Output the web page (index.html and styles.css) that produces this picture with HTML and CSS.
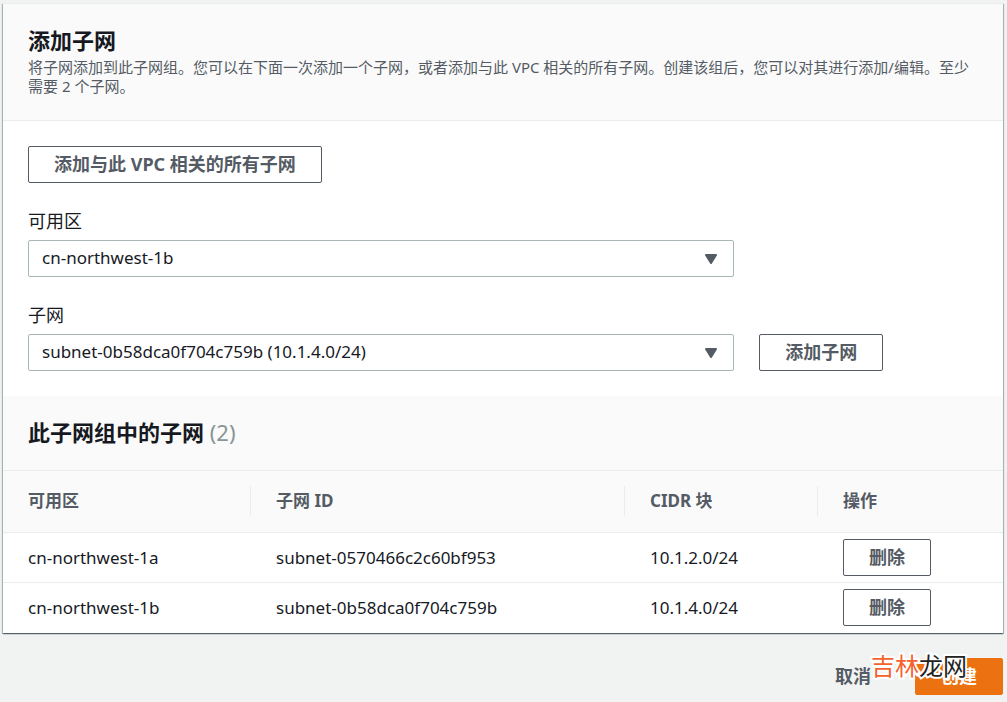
FILE: index.html
```html
<!DOCTYPE html>
<html lang="zh-CN">
<head>
<meta charset="utf-8">
<meta name="viewport" content="width=device-width, initial-scale=1">
<title>添加子网</title>
<link rel="stylesheet" href="styles.css">
</head>
<body>
<main class="page">
  <div class="panel">
    <header class="panel-header">
      <h2 class="title">添加子网</h2>
      <p class="description">将子网添加到此子网组。您可以在下面一次添加一个子网，或者添加与此 VPC 相关的所有子网。创建该组后，您可以对其进行添加/编辑。至少需要 2 个子网。</p>
    </header>
    <section class="form">
      <button class="btn" type="button">添加与此 VPC 相关的所有子网</button>
      <div class="field">
        <label class="label" for="zone">可用区</label>
        <div class="select-wrap">
          <select class="select" id="zone"><option>cn-northwest-1b</option></select>
          <svg class="caret" viewBox="0 0 14 12" aria-hidden="true"><path d="M2 2h10L7 10z"/></svg>
        </div>
      </div>
      <div class="field">
        <label class="label" for="subnet">子网</label>
        <div class="select-wrap">
          <select class="select" id="subnet"><option>subnet-0b58dca0f704c759b (10.1.4.0/24)</option></select>
          <svg class="caret" viewBox="0 0 14 12" aria-hidden="true"><path d="M2 2h10L7 10z"/></svg>
        </div>
        <div class="side"><button class="btn" type="button">添加子网</button></div>
      </div>
    </section>
    <header class="table-header">
      <h2 class="title">此子网组中的子网 <span class="count">(2)</span></h2>
    </header>
    <table class="table">
      <thead>
        <tr>
          <th class="col-zone"><div class="head">可用区</div></th>
          <th class="col-id"><div class="head">子网 ID</div></th>
          <th class="col-cidr"><div class="head">CIDR 块</div></th>
          <th class="col-action"><div class="head">操作</div></th>
        </tr>
      </thead>
      <tbody>
        <tr>
          <td>cn-northwest-1a</td>
          <td>subnet-0570466c2c60bf953</td>
          <td>10.1.2.0/24</td>
          <td><button class="btn" type="button">删除</button></td>
        </tr>
        <tr>
          <td>cn-northwest-1b</td>
          <td>subnet-0b58dca0f704c759b</td>
          <td>10.1.4.0/24</td>
          <td><button class="btn" type="button">删除</button></td>
        </tr>
      </tbody>
    </table>
  </div>
  <footer class="actions">
    <button class="btn btn-link" type="button">取消</button>
    <button class="btn btn-primary" type="button">创建</button>
    <div class="watermark"><span class="watermark-red">吉林</span>龙网</div>
  </footer>
</main>
</body>
</html>
```
FILE: styles.css
```css
* { box-sizing: border-box; }

body {
  margin: 0;
  background: #f1f3f3;
  color: #16191f;
  font-family: "Noto Sans", "Noto Sans CJK SC", sans-serif;
  font-size: 17px;
  line-height: 22px;
}

.page { padding: 3px 4px 7px 3px; }

.panel {
  background: #fff;
  border-top: 1px solid #eaeded;
  box-shadow: 0 1px 1px #001c2466, 1px 1px 1px #001c2440, -1px 1px 1px #001c2440;
}

.panel-header {
  padding: 23px 25px 24px;
  background: #fafafa;
  border-bottom: 1px solid #eaeded;
}

.title {
  margin: 0;
  font-size: 22px;
  line-height: 26px;
  font-weight: 700;
}

.count { color: #879596; font-weight: 400; }

.description {
  margin: 5px 0 0;
  color: #545b64;
  font-size: 15px;
  line-height: 19px;
}

.form {
  display: flex;
  flex-direction: column;
  align-items: flex-start;
  gap: 27px;
  padding: 25px;
}

.field {
  display: grid;
  grid-template-columns: repeat(12, 1fr);
  column-gap: 25px;
  row-gap: 8px;
  width: 100%;
}

.label { grid-column: 1 / -1; font-size: 18px; }

.select-wrap { position: relative; grid-column: span 9; }
.side { grid-column: span 3; }

.select {
  display: block;
  width: 100%;
  height: 37px;
  padding: 0 48px 2px 13px;
  border: 1px solid #aab7b8;
  border-radius: 2px;
  background: #fff;
  color: inherit;
  font: inherit;
  appearance: none;
}

.caret {
  position: absolute;
  right: 16px;
  top: 13px;
  width: 14px;
  height: 12px;
  fill: #545b64;
  stroke: #545b64;
  stroke-width: 2;
  stroke-linejoin: round;
  pointer-events: none;
}

.btn {
  display: block;
  height: 37px;
  padding: 0 25px 2px;
  border: 1px solid #545b64;
  border-radius: 2px;
  background: #fff;
  color: #545b64;
  font: inherit;
  font-size: 18px;
  font-weight: 700;
  white-space: nowrap;
}

.table-header {
  padding: 24px 25px;
  background: #fafafa;
  border-bottom: 1px solid #eaeded;
}

.table-header .title { line-height: 24px; padding-bottom: 2px; }

.table {
  width: 100%;
  table-layout: fixed;
  border-collapse: separate;
  border-spacing: 0;
}

.col-zone { width: 24.8%; }
.col-id { width: 37.4%; }
.col-cidr { width: 19.3%; }
.col-action { width: 18.5%; }

.table th {
  padding: 15px 0 16px;
  background: #fafafa;
  border-bottom: 1px solid #eaeded;
  color: #545b64;
  font-weight: 700;
  text-align: left;
}

.head {
  padding: 4px 25px;
  border-right: 1px solid #eaeded;
}

.table th:last-child .head { border-right: 0; }

.table td {
  height: 50px;
  padding: 0 25px;
  border-bottom: 1px solid #eaeded;
}

.table tbody tr:last-child td { border-bottom-color: #fff; }

.actions {
  position: relative;
  display: flex;
  justify-content: flex-end;
  gap: 18px;
  margin-top: 25px;
}

.btn-link { border-color: transparent; background: transparent; }
.btn-primary { border-color: #ec7211; background: #ec7211; color: #fff; }

.watermark {
  position: absolute;
  right: 36px;
  top: -8px;
  color: #222;
  font-family: "Noto Sans CJK SC", sans-serif;
  font-size: 24px;
  line-height: 30px;
  -webkit-text-stroke: 4px #fff;
  paint-order: stroke fill;
  pointer-events: none;
}

.watermark-red { color: #f4622d; }
```
